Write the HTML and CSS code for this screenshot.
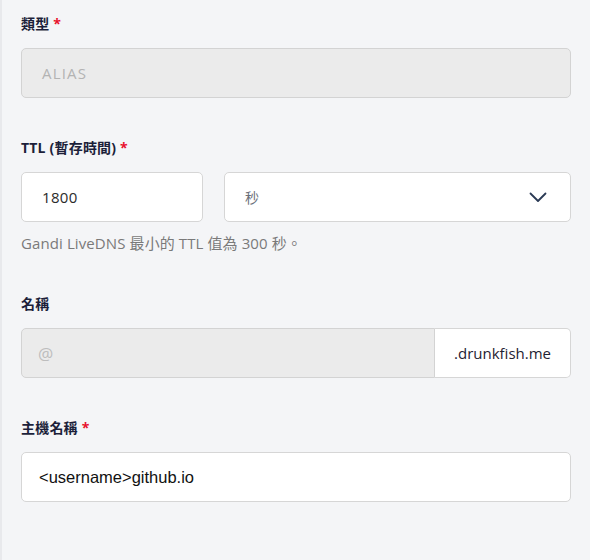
FILE: index.html
```html
<!DOCTYPE html>
<html lang="zh-Hant">
<head>
<meta charset="utf-8">
<link rel="stylesheet" href="styles.css">
</head>
<body>
<div class="form">
  <div class="field">
    <div class="label">類型 <span class="req">*</span></div>
    <div class="input disabled caps">ALIAS</div>
  </div>
  <div class="field">
    <div class="label">TTL (暫存時間) <span class="req">*</span></div>
    <div class="row">
      <div class="input ttl">1800</div>
      <div class="input select">
        <span class="unit">秒</span>
        <svg class="chev" width="18" height="12" viewBox="0 0 18 12"><path d="M1.5 2.5 L9 10 L16.5 2.5" fill="none" stroke="#2b3a55" stroke-width="1.8" stroke-linecap="round" stroke-linejoin="round"/></svg>
      </div>
    </div>
    <div class="help">Gandi LiveDNS 最小的 TTL 值為 300 秒。</div>
  </div>
  <div class="field">
    <div class="label">名稱</div>
    <div class="group">
      <div class="input disabled grow at">@</div>
      <div class="suffix">.drunkfish.me</div>
    </div>
  </div>
  <div class="field">
    <div class="label">主機名稱 <span class="req">*</span></div>
    <div class="input host">&lt;username&gt;github.io</div>
  </div>
</div>
</body>
</html>
```
FILE: styles.css
```css
html, body {
  margin: 0;
  padding: 0;
  background: #f4f5f7;
}
body {
  width: 590px;
  height: 560px;
  box-sizing: border-box;
  border-left: 2px solid #e8e9ec;
  font-family: "Open Sans", "Noto Sans CJK TC", sans-serif;
  overflow: hidden;
}
.form {
  padding: 14px 19px 0 19px;
}
.field {
  margin-bottom: 40px;
}
.label {
  font-size: 14px;
  line-height: 20px;
  font-weight: 700;
  color: #1c1f3a;
  margin-bottom: 14px;
  letter-spacing: 0.2px;
}
.req {
  color: #e8112d;
}
.input {
  box-sizing: border-box;
  height: 50px;
  border: 1px solid #d6d6d6;
  border-radius: 5px;
  background: #fff;
  display: flex;
  align-items: center;
  padding: 0 20px;
  font-size: 15px;
  letter-spacing: 0.3px;
  color: #2a2a2a;
}
.caps {
  letter-spacing: 1.2px;
}
.disabled {
  background: #ebebeb;
  color: #b3b3b3;
  border-color: #d3d3d3;
}
.row {
  display: flex;
  gap: 21px;
}
.ttl {
  width: 182px;
}
.select {
  flex: 1;
  justify-content: space-between;
  padding-right: 23px;
}
.unit {
  color: #6b6f7a;
  font-size: 14px;
}
.chev {
  display: block;
}
.help {
  margin-top: 11px;
  margin-bottom: 41px;
  font-size: 15px;
  line-height: 20px;
  color: #7a7a7a;
  letter-spacing: 0.1px;
}
.field:has(.help) {
  margin-bottom: 0;
}
.group {
  display: flex;
  height: 50px;
}
.grow {
  flex: 1;
  border-radius: 5px 0 0 5px;
  padding-left: 16px;
}
.at {
  font-size: 17px;
  color: #bdbdbd;
}
.suffix {
  box-sizing: border-box;
  height: 50px;
  width: 136px;
  border: 1px solid #d6d6d6;
  border-left: none;
  border-radius: 0 5px 5px 0;
  background: #fff;
  display: flex;
  align-items: center;
  justify-content: center;
  font-size: 15px;
  color: #1f2233;
}
.host {
  font-family: "Liberation Sans", sans-serif;
  font-size: 16.5px;
  letter-spacing: 0;
  color: #111;
  padding-left: 17px;
}
```
